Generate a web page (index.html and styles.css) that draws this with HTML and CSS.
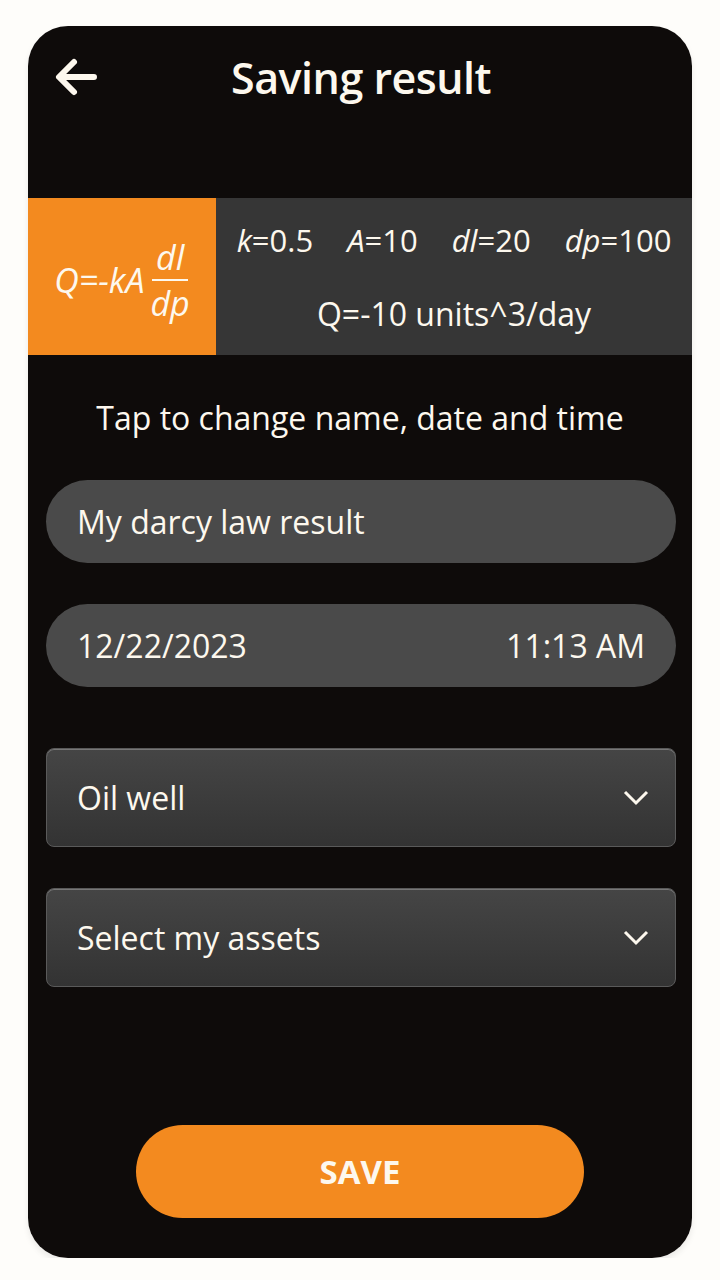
FILE: index.html
```html
<!DOCTYPE html>
<html lang="en">
<head>
    <meta charset="UTF-8">
    <meta name="viewport" content="width=device-width, initial-scale=1.0">
    <title>Saving result</title>
    <link rel="stylesheet" href="styles.css">
</head>
<body>
    <div class="phone">
        <header class="topbar">
            <a href="#none" class="back">
                <svg width="44" height="40" viewBox="0 0 44 40">
                    <path d="M40 20H6M20 5L5 20L20 35" fill="none" stroke="#fdf8ee" stroke-width="6" stroke-linecap="round" stroke-linejoin="round"/>
                </svg>
            </a>
            <h1>Saving result</h1>
        </header>

        <section class="formula">
            <div class="eq">
                <span class="lhs">Q=-kA</span>
                <span class="frac"><span class="num">dl</span><span class="den">dp</span></span>
            </div>
            <div class="vals">
                <p class="vars">
                    <span><i>k</i>=0.5</span>
                    <span><i>A</i>=10</span>
                    <span><i>dl</i>=20</span>
                    <span><i>dp</i>=100</span>
                </p>
                <p class="res">Q=-10 units^3/day</p>
            </div>
        </section>

        <p class="hint">Tap to change name, date and time</p>

        <div class="pill">My darcy law result</div>
        <div class="pill split"><span>12/22/2023</span><span>11:13 AM</span></div>

        <div class="select">
            <span>Oil well</span>
            <svg width="26" height="16" viewBox="0 0 26 16"><path d="M2 2L13 13L24 2" fill="none" stroke="#fdf8ee" stroke-width="3"/></svg>
        </div>
        <div class="select">
            <span>Select my assets</span>
            <svg width="26" height="16" viewBox="0 0 26 16"><path d="M2 2L13 13L24 2" fill="none" stroke="#fdf8ee" stroke-width="3"/></svg>
        </div>

        <div class="foot">
            <a href="#none" class="save">SAVE</a>
        </div>
    </div>
</body>
</html>
```

FILE: styles.css
```css
*{padding: 0;
margin: 0;
box-sizing: border-box;}
body{
    background: #fefdfa;
    font-family: "Open Sans", "Noto Sans", sans-serif;
    color: #fdf8ee;
    padding: 26px 28px 0;
}
.phone{
    width: 664px;
    height: 1232px;
    background: #0e0b0a;
    border-radius: 40px;
    box-shadow: 0 4px 6px rgba(0, 0, 0, 0.08);
    display: flex;
    flex-direction: column;
    overflow: hidden;
}
.topbar{
    height: 172px;
    position: relative;
    display: flex;
    justify-content: center;
    padding-top: 26px;
}
.back{
    position: absolute;
    left: 26px;
    top: 31px;
}
h1{
    font-size: 43px;
    font-weight: 600;
    letter-spacing: -0.5px;
    line-height: 52px;
    margin-left: 2px;
}
.formula{
    display: flex;
    height: 157px;
}
.eq{
    width: 188px;
    background: #f38a1f;
    display: flex;
    align-items: center;
    justify-content: center;
    font-style: italic;
    font-size: 34px;
    padding-top: 6px;
}
.frac{
    display: flex;
    flex-direction: column;
    align-items: center;
    margin-left: 6px;
    line-height: 36px;
}
.num{
    border-bottom: 2px solid #fdf8ee;
    padding: 0 4px 4px;
}
.den{
    padding-top: 4px;
}
.vals{
    flex: 1;
    background: #363636;
    text-align: center;
    font-size: 31px;
    padding-top: 20px;
}
.vars{
    display: flex;
    justify-content: center;
    gap: 34px;
    line-height: 44px;
}
.res{
    margin-top: 30px;
    line-height: 44px;
    font-size: 32px;
}
.hint{
    text-align: center;
    font-size: 32px;
    margin-top: 41px;
    line-height: 44px;
}
.pill{
    margin: 40px 16px 0 18px;
    height: 83px;
    border-radius: 42px;
    background: #4a4a4a;
    font-size: 32px;
    display: flex;
    align-items: center;
    padding: 0 31px;
}
.split{
    justify-content: space-between;
    margin-top: 41px;
}
.select{
    margin: 61px 16px 0 18px;
    height: 99px;
    border-radius: 8px;
    background: linear-gradient(#454545, #333333);
    border: 1px solid #5a5a5a;
    box-shadow: inset 0 1px 0 #777;
    font-size: 32px;
    display: flex;
    align-items: center;
    justify-content: space-between;
    padding: 0 26px 0 30px;
}
.select + .select{
    margin-top: 41px;
}
.foot{
    flex: 1;
    display: flex;
    justify-content: center;
    align-items: flex-end;
    padding-bottom: 40px;
}
.save{
    width: 448px;
    height: 93px;
    border-radius: 47px;
    background: #f38a1f;
    color: #fdf8ee;
    text-decoration: none;
    font-size: 33px;
    font-weight: 700;
    display: flex;
    justify-content: center;
    align-items: center;
}
```
